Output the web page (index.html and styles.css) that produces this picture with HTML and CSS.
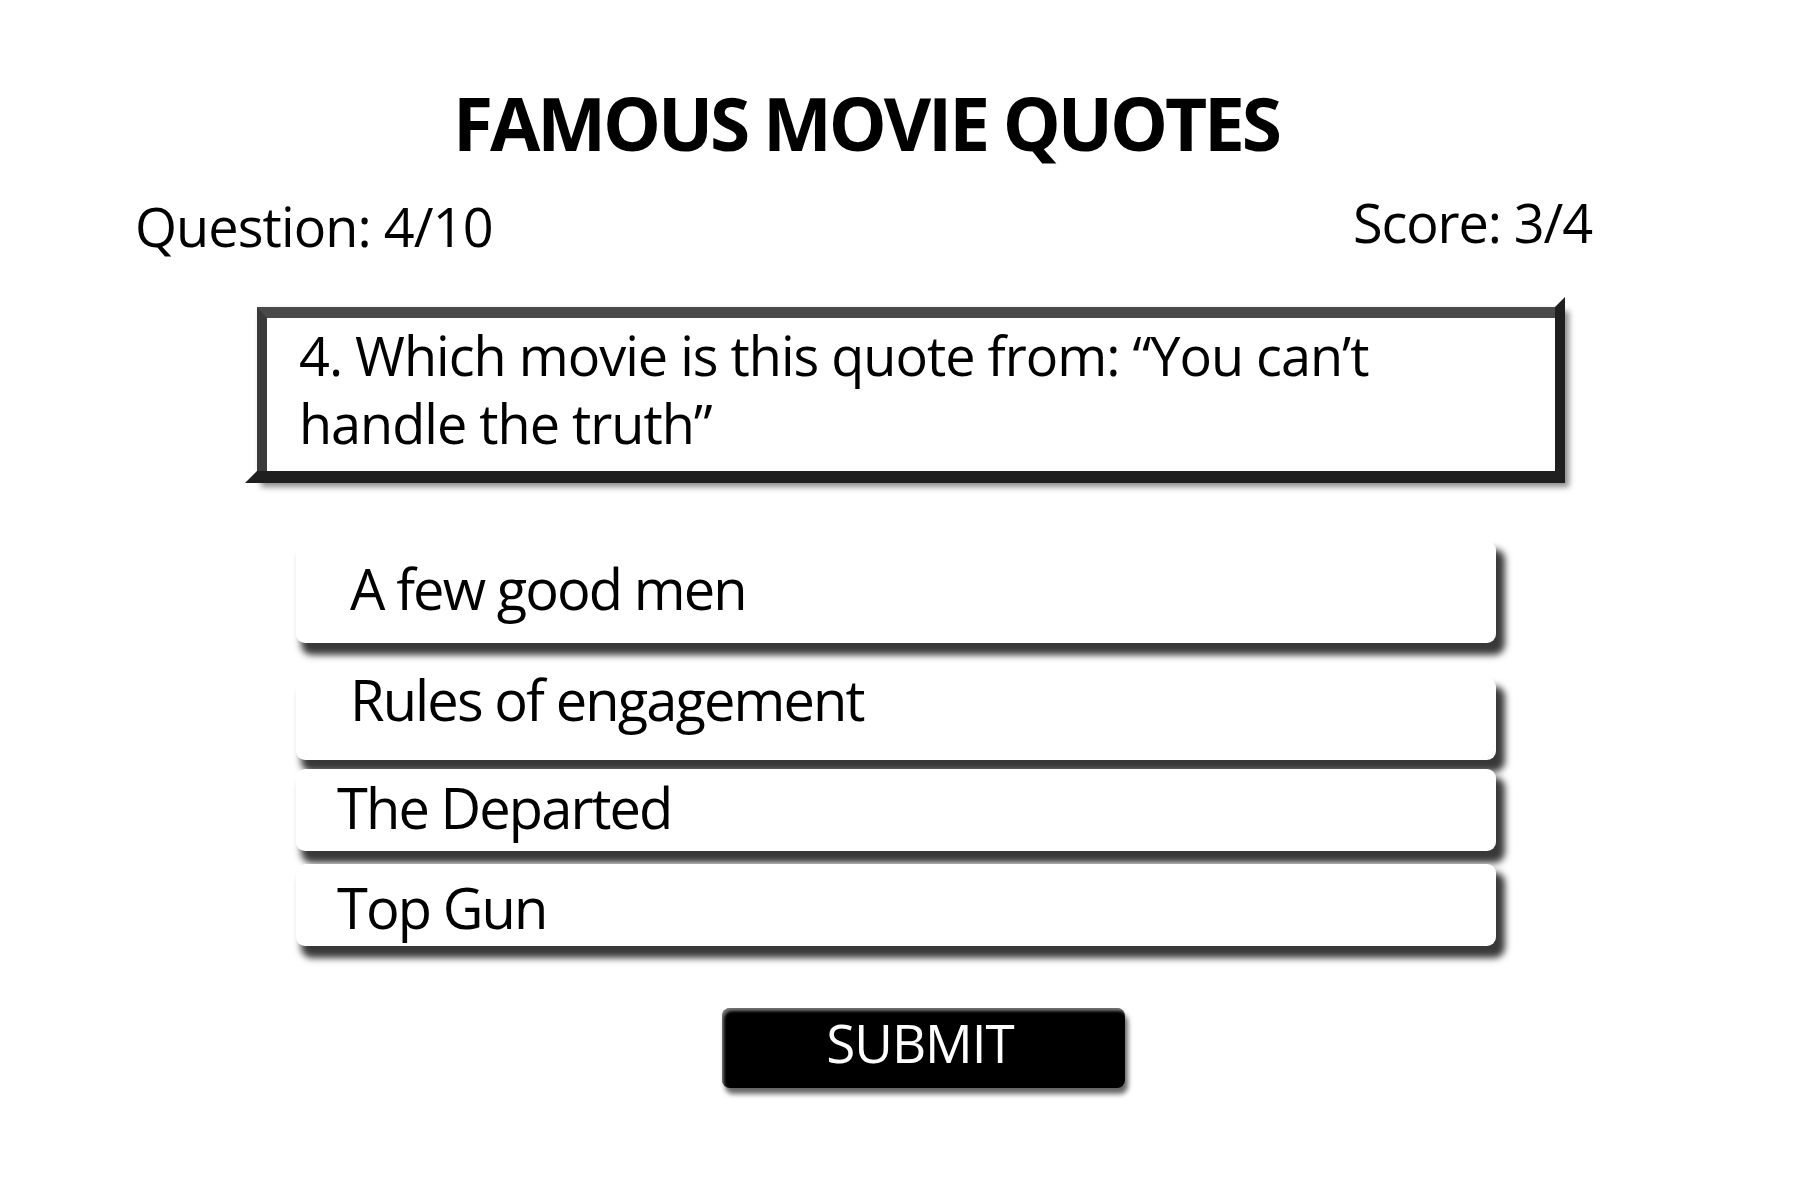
FILE: index.html
```html
<!DOCTYPE html>
<html lang="en">
<head>
<meta charset="utf-8">
<title>Famous Movie Quotes</title>
<link rel="stylesheet" href="styles.css">
</head>
<body>
<main class="quiz">
  <h1 class="quiz-title">FAMOUS MOVIE QUOTES</h1>
  <div class="stats">
    <span class="stat stat-question">Question: 4/10</span>
    <span class="stat stat-score">Score: 3/4</span>
  </div>
  <div class="question-box">
    <p class="question-text">4. Which movie is this quote from: “You can’t<br>handle the truth”</p>
  </div>
  <ul class="options">
    <li class="option option-1"><span class="option-label">A few good men</span></li>
    <li class="option option-2"><span class="option-label">Rules of engagement</span></li>
    <li class="option option-3"><span class="option-label">The Departed</span></li>
    <li class="option option-4"><span class="option-label">Top Gun</span></li>
  </ul>
  <button class="submit" type="button">SUBMIT</button>
</main>
</body>
</html>
```
FILE: styles.css
```css
* { box-sizing: border-box; }
html, body { margin: 0; padding: 0; background: #fff; }
body {
  font-family: "Open Sans", "Noto Sans", sans-serif;
  color: #000;
  width: 1800px;
  height: 1200px;
  overflow: hidden;
}
.quiz { padding-top: 86px; }
.quiz-title {
  margin: 0;
  font-size: 73px;
  font-weight: 700;
  line-height: 1;
  text-align: center;
  padding-right: 68px;
  letter-spacing: -3.1px;
}
.stats {
  margin-top: 36px;
  display: flex;
  justify-content: space-between;
  align-items: flex-start;
  padding: 0 208px 0 135px;
  font-size: 54px;
  line-height: 1;
}
.stat-question { margin-top: 4px; letter-spacing: -0.9px; }
.stat-score { letter-spacing: -1.1px; }

.question-box {
  position: relative;
  margin: 54px 0 0 257px;
  width: 1308px;
  border-style: solid;
  border-width: 11px 10px 12px 10px;
  border-color: #4a4a4a #1f1f1f #1f1f1f #3a3a3a;
  padding: 3px 0 14px 32px;
  background: #fff;
  box-shadow: 4px 4px 6px rgba(0,0,0,.45);
}
.question-box::before {
  content: "";
  position: absolute;
  left: -22px;
  bottom: -12px;
  width: 32px;
  height: 12px;
  background: #1f1f1f;
  clip-path: polygon(12px 0, 100% 0, 100% 100%, 0 100%);
}
.question-box::after {
  content: "";
  position: absolute;
  right: -10px;
  top: -21px;
  width: 10px;
  height: 31px;
  background: #1f1f1f;
  clip-path: polygon(0 10px, 100% 0, 100% 100%, 0 100%);
}
.question-text {
  margin: 0;
  font-size: 54px;
  line-height: 68px;
  letter-spacing: -1px;
}

.options {
  list-style: none;
  margin: 58px 0 0 296px;
  padding: 0;
  width: 1200px;
}
.option {
  display: flex;
  align-items: flex-end;
  background: #fff;
  border-radius: 9px;
  box-shadow: 7px 10px 7px 2px rgba(0,0,0,.78);
  font-size: 56px;
  line-height: 1;
  letter-spacing: -1.9px;
  height: 82px;
}
.option-1 { height: 102px; padding: 0 0 26.7px 54px; }
.option-2 { margin-top: 35px; padding: 0 0 32.7px 54px; }
.option-3 { margin-top: 9px; padding: 0 0 15.7px 41px; }
.option-4 { margin-top: 13px; padding: 0 0 10.7px 41px; }

.submit {
  display: block;
  margin: 62px 0 0 722px;
  width: 403px;
  height: 80px;
  border: none;
  border-radius: 8px;
  background: #000;
  color: #fff;
  font-family: inherit;
  font-size: 53px;
  line-height: 1;
  letter-spacing: -1px;
  padding: 8px 7px 19px 0;
  text-align: center;
  box-shadow: inset 2px 3px 3px rgba(255,255,255,.45), 3px 6px 5px rgba(0,0,0,.6);
}
```
